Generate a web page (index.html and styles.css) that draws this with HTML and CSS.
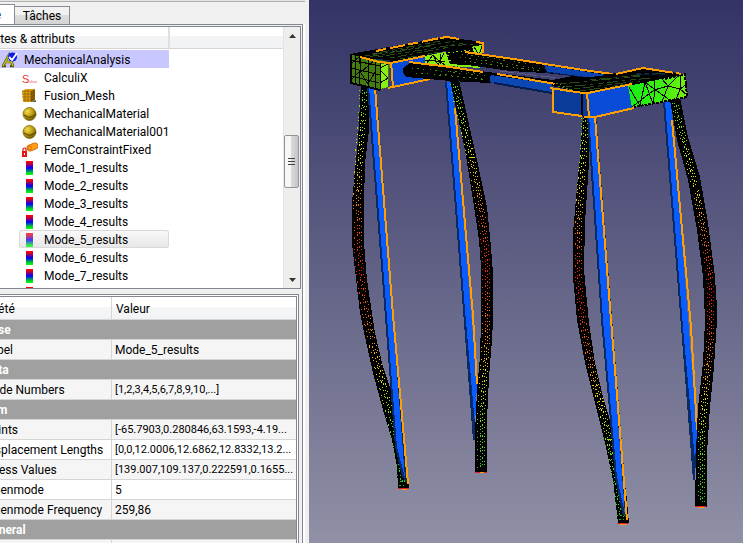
FILE: index.html
```html
<!DOCTYPE html>
<html lang="fr">
<head>
  <meta charset="utf-8" />
  <meta name="viewport" content="width=device-width, initial-scale=1" />
  <title>MechanicalAnalysis</title>
  <link rel="stylesheet" href="styles.css">
</head>
<body>

  <!-- shared icons -->
  <svg class="defs" width="0" height="0" aria-hidden="true">
    <defs>
      <linearGradient id="g-result" x1="0" y1="0" x2="0" y2="1">
        <stop offset="0" stop-color="#ff0000" />
        <stop offset="0.15" stop-color="#dd0022" />
        <stop offset="0.5" stop-color="#0000ff" />
        <stop offset="0.85" stop-color="#00dd22" />
        <stop offset="1" stop-color="#00ff00" />
      </linearGradient>
      <radialGradient id="g-ball" cx="0.35" cy="0.3" r="0.75">
        <stop offset="0" stop-color="#f0dc50" />
        <stop offset="0.5" stop-color="#c0a010" />
        <stop offset="1" stop-color="#6a5600" />
      </radialGradient>
      <symbol id="i-result" viewBox="0 0 16 16">
        <rect x="4" y="1" width="7" height="14" fill="url(#g-result)" />
      </symbol>
      <symbol id="i-ball" viewBox="0 0 16 16">
        <circle cx="7.5" cy="8" r="6.5" fill="url(#g-ball)" stroke="#7a6505" stroke-width="0.8" />
        <path d="M2 9q4 3 7 2t5-3" fill="none" stroke="#4d3f00" stroke-width="1" />
      </symbol>
    </defs>
  </svg>

  <aside class="dock">
    <div class="titlebar"></div>
    <nav class="tabs">
      <button class="tab active" type="button">Modèle</button>
      <button class="tab" type="button">Tâches</button>
    </nav>
    <div class="pane">

      <section class="tree">
        <div class="tree-view">
          <div class="tree-head">
            <span class="col-label">Étiquettes &amp; attributs</span>
          </div>
          <ul>
            <li class="analysis">
              <svg class="icon" viewBox="0 0 16 16"><path d="M1 14L7 3l4 11M4 10h6M0 14h4M8 14h4" fill="none" stroke="#5c5a10" stroke-width="2.6" /><path d="M1 14L7 3l4 11M4 10h6" fill="none" stroke="#c9c020" stroke-width="1.3" /><circle cx="10.500" cy="5" r="4.500" fill="#0a1ee6" /><path d="M7 5l3 3 5-7" fill="none" stroke="#fff" stroke-width="1.8" /></svg>
              MechanicalAnalysis
            </li>
            <li>
              <svg class="icon" viewBox="0 0 16 16"><text class="solver-s" x="0" y="13">S</text><text class="solver-rest" x="7" y="13">olver</text></svg>
              CalculiX
            </li>
            <li>
              <svg class="icon" viewBox="0 0 16 16"><path d="M0 3l4-2h9v11l-4 2H1z" fill="#e0a010" /><path d="M9 3l4-2v11l-4 2z" fill="#8a5c00" /><path d="M0 3h9M0 6h9l4-2M0 9h9l4-2M1 12h8l4-2M3 2v12M6 2v12M9 3v11" fill="none" stroke="#6e4a00" stroke-width="0.500" /><path d="M9 14h5v-2z" fill="#555" /></svg>
              Fusion_Mesh
            </li>
            <li><svg class="icon"><use href="#i-ball" /></svg>MechanicalMaterial</li>
            <li><svg class="icon"><use href="#i-ball" /></svg>MechanicalMaterial001</li>
            <li>
              <svg class="icon" viewBox="0 0 16 16"><path d="M8 6l5-2" stroke="#c86a00" stroke-width="7" stroke-linecap="round" /><path d="M8 6l5-2" stroke="#ff9c1c" stroke-width="5.500" stroke-linecap="round" /><circle cx="7.500" cy="6" r="2" fill="none" stroke="#d87400" /><rect x="0" y="9" width="5" height="6" fill="#e81414" /><path d="M1 9V7q1.500-2 3 0v2" fill="none" stroke="#d02020" stroke-width="1.200" /><path d="M2 11h1v2H2z" fill="#fff" /></svg>
              FemConstraintFixed
            </li>
            <li><svg class="icon"><use href="#i-result" /></svg>Mode_1_results</li>
            <li><svg class="icon"><use href="#i-result" /></svg>Mode_2_results</li>
            <li><svg class="icon"><use href="#i-result" /></svg>Mode_3_results</li>
            <li><svg class="icon"><use href="#i-result" /></svg>Mode_4_results</li>
            <li class="selected"><svg class="icon"><use href="#i-result" /></svg>Mode_5_results</li>
            <li><svg class="icon"><use href="#i-result" /></svg>Mode_6_results</li>
            <li><svg class="icon"><use href="#i-result" /></svg>Mode_7_results</li>
            <li><svg class="icon"><use href="#i-result" /></svg></li>
          </ul>
        </div>
        <div class="scrollbar">
          <button type="button" aria-label="Monter"><svg width="7" height="4"><path d="M0 4L3.500 0L7 4z" fill="#333" /></svg></button>
          <div class="track"><div class="thumb"><i></i><i></i><i></i></div></div>
          <button type="button" aria-label="Descendre"><svg width="7" height="4"><path d="M0 0L3.500 4L7 0z" fill="#333" /></svg></button>
        </div>
      </section>

      <section class="props">
        <table>
          <thead>
            <tr><th class="name">Propriété</th><th>Valeur</th></tr>
          </thead>
          <tbody>
            <tr class="group"><th colspan="2">Base</th></tr>
            <tr class="alt"><td>Label</td><td>Mode_5_results</td></tr>
            <tr class="group"><th colspan="2">Data</th></tr>
            <tr class="alt"><td>Node Numbers</td><td class="list">[1,2,3,4,5,6,7,8,9,10,...]</td></tr>
            <tr class="group"><th colspan="2">Fem</th></tr>
            <tr class="alt"><td>Points</td><td class="list">[-65.7903,0.280846,63.1593,-4.19...</td></tr>
            <tr><td>Displacement Lengths</td><td class="list">[0,0,12.0006,12.6862,12.8332,13.2...</td></tr>
            <tr class="alt"><td>Stress Values</td><td class="list">[139.007,109.137,0.222591,0.1655...</td></tr>
            <tr><td>Eigenmode</td><td>5</td></tr>
            <tr class="alt"><td>Eigenmode Frequency</td><td>259,86</td></tr>
            <tr class="group"><th colspan="2">General</th></tr>
            <tr class="alt"><td></td><td></td></tr>
          </tbody>
        </table>
      </section>

    </div>
  </aside>

  <main class="view">
    <svg class="scene" viewBox="309 0 434 543" preserveAspectRatio="xMinYMin meet" shape-rendering="crispEdges" fill="none">
      <defs>
        <!-- displacement colour scale along a leg -->
        <linearGradient id="scale-l" gradientUnits="userSpaceOnUse" x1="0" y1="85" x2="0" y2="485">
          <stop offset="0" stop-color="#5ce010" />
          <stop offset="0.15" stop-color="#d8f010" />
          <stop offset="0.25" stop-color="#f0b010" />
          <stop offset="0.36" stop-color="#f04810" />
          <stop offset="0.46" stop-color="#e82010" />
          <stop offset="0.6" stop-color="#f07010" />
          <stop offset="0.72" stop-color="#f0e010" />
          <stop offset="0.84" stop-color="#70e010" />
          <stop offset="1" stop-color="#10d020" />
        </linearGradient>
        <linearGradient id="scale-r" gradientUnits="userSpaceOnUse" x1="0" y1="105" x2="0" y2="518">
          <stop offset="0" stop-color="#5ce010" />
          <stop offset="0.15" stop-color="#d8f010" />
          <stop offset="0.25" stop-color="#f0b010" />
          <stop offset="0.36" stop-color="#f04810" />
          <stop offset="0.46" stop-color="#e01010" />
          <stop offset="0.6" stop-color="#f07010" />
          <stop offset="0.72" stop-color="#f0e010" />
          <stop offset="0.84" stop-color="#70e010" />
          <stop offset="1" stop-color="#10d020" />
        </linearGradient>
        <linearGradient id="g-end" x1="0" y1="0" x2="1" y2="0">
          <stop offset="0" stop-color="#14ee14" />
          <stop offset="0.6" stop-color="#40ee10" />
          <stop offset="1" stop-color="#78f010" />
        </linearGradient>
        <path id="mesh-a" d="M364 90C362 130 357 170 358 215C358 260 361 285 368 320C376 360 389 405 397 445L402 482" />
        <path id="mesh-b" d="M454 84C462 120 474 165 480 205C486 240 487 260 487 310C487 350 482 390 481 430V468" />
        <path id="mesh-c" d="M585 118C584 160 579 190 578 250C578 290 582 315 588 350C596 390 606 420 613 460L621 518" />
        <path id="mesh-d" d="M675 103C682 140 697 185 703 230C710 270 711 290 711 320C710 360 703 400 701 450V503" />
      </defs>

      <!-- rear legs -->
      <path fill="#082a66" d="M445 82h5L476 384L475 440h-2L463 310z" />
      <path fill="#0a5cff" d="M447 82h5L477 384L475 425L465 310z" />
      <path stroke="#ffa000" stroke-width="2" d="M455 108L473 316L477 384" />
      <path fill="#000" d="M450 80L457 113L465 150L473 200L479 240L481 267V320L480 357L477 390L475 433V472H487V420L489 377L492 340L493 320V273L491 247L487 207L477 160L468 120L459 80z" />
      <path fill="#082a66" d="M663 102h6L697 432L695 480h-2L681 327z" />
      <path fill="#0a5cff" d="M665 102h6L697 432L695 460L683 327z" />
      <path stroke="#ffa000" stroke-width="2" d="M672 120L691 327L697 430" />
      <path fill="#000" d="M670 100L677 140L688 180L697 230L703 277L705 320L703 363L698 407L696 453L695 507H707V453L710 407L714 367L717 320V307L715 277L708 223L700 177L688 137L680 98z" />

      <!-- front legs -->
      <path fill="#000" d="M361 84L358 140L355 170L352 203V243L355 270L360 313L365 337L373 373L383 410L392 440L397 467L398 488H409L408 470L392 393L383 367L375 333L370 300L367 280L364 243V203L365 163L369 130V84z" />
      <path fill="#000" d="M583 115L580 157L577 187L573 233V277L577 320L585 363L595 403L605 443L613 480L618 523H629L626 490L612 427L603 397L595 363L589 323L584 270L585 223L589 163V115z" />

      <!-- mesh nodes -->
      <g stroke="url(#scale-l)">
        <use href="#mesh-a" x="-4" stroke-dasharray="1 4 1 2 1 6 2 5" />
        <use href="#mesh-a" x="-1" stroke-dasharray="1 2 1 3 1 1 2 4" />
        <use href="#mesh-a" x="1" stroke-dasharray="1 3 2 5 1 2" stroke-dashoffset="2" />
        <use href="#mesh-a" x="3" stroke-dasharray="1 5 1 2 1 4" stroke-dashoffset="4" />
        <use href="#mesh-b" x="-4" stroke-dasharray="1 7 1 5 1 3" />
        <use href="#mesh-b" x="-1" stroke-dasharray="1 2 1 3 1 1 2 4" />
        <use href="#mesh-b" x="1" stroke-dasharray="1 3 2 2 1 2" stroke-dashoffset="2" />
        <use href="#mesh-b" x="3" stroke-dasharray="1 5 1 2 1 4" stroke-dashoffset="4" />
      </g>
      <g stroke="url(#scale-r)">
        <use href="#mesh-c" x="-3" stroke-dasharray="1 4 1 2 1 6 2 5" />
        <use href="#mesh-c" x="-1" stroke-dasharray="1 2 1 3 1 1 2 4" />
        <use href="#mesh-c" x="1" stroke-dasharray="1 3 2 5 1 2" stroke-dashoffset="2" />
        <use href="#mesh-c" x="3" stroke-dasharray="1 5 1 2 1 4" stroke-dashoffset="4" />
        <use href="#mesh-d" x="-3" stroke-dasharray="1 7 1 5 1 3" />
        <use href="#mesh-d" x="-1" stroke-dasharray="1 2 1 3 1 1 2 4" />
        <use href="#mesh-d" x="1" stroke-dasharray="1 3 2 2 1 2" stroke-dashoffset="2" />
        <use href="#mesh-d" x="3" stroke-dasharray="1 5 1 2 1 4" stroke-dashoffset="4" />
      </g>

      <path fill="#082a66" d="M367 86h9L407 484L402 476L395 447L385 317z" />
      <path fill="#0a5cff" d="M369 86h6L405 478L397 447L387 317z" />
      <path stroke="#ffa000" stroke-width="2" d="M375 88L393 315L403 427L408 484" />
      <path fill="#082a66" d="M587 115h9L628 520L622 513L615 477L601 320z" />
      <path fill="#0a5cff" d="M589 115h6L625 514L617 477L603 320z" />
      <path stroke="#ffa000" stroke-width="2" d="M595 117L611 320L627 520" />

      <!-- feet -->
      <path stroke="#10c818" stroke-dasharray="2 2 1 3" d="M400 481h7M399 485h8M620 515h7M619 519h7" />
      <path stroke="#e02030" d="M398 488h11M475 472h12M617 523h11M695 506h11" />
      <path stroke="#ffa000" d="M402 489h5M480 472h4M620 524h6M698 507h6" />

      <!-- left cross beam -->
      <path fill="#0a4cd8" d="M390 62L428 55L450 66L430 79L393 87z" />
      <path fill="#86ee10" d="M425 56L483 44L480 68L450 66L425 63z" />
      <path stroke="#000" d="M427 63l6-8 5 10 6-12M433 56l12 9M425 60l20 2M440 54v10M474 47l5 8 3-9M470 52l10 2" />
      <path fill="#000" d="M445 50L472 46L474 53L480 56L478 66L450 64z" />
      <path stroke="#80e010" stroke-dasharray="2 3 1 2" d="M448 53L470 50M447 56L464 54M449 60L456 61M455 66L480 67" />
      <path fill="#000" d="M350 54L445 37L483 42L482 45L445 51L425 56L391 62L372 61z" />
      <path stroke="#284c18" stroke-dasharray="5 3 9 3 3 4" d="M365 56L455 41M378 57L465 43M362 58L430 46M390 58L450 47M400 59L440 52M372 54L440 41M450 46L474 44" />
      <path stroke="#102850" stroke-width="2" d="M362 59l28 2" />
      <path fill="#447c10" d="M351 55L390 62L388 87L380 90L351 82z" />
      <path fill="#88f010" d="M380 64L388 63L388 87L380 89z" />
      <path stroke="#000" d="M355 56v28M361 57l-2 28M368 58l1 29M375 60v29M351 60l29 6M351 68l29 7M351 76l28 7M351 64l8-7 2 13-10 10M361 72l14-12M359 70l9 14 7-12M380 63v27M380 70l8 8-8 5M380 68l8-4" />
      <path stroke="#000" stroke-width="2" d="M351 54v29L380 90" />
      <path stroke="#ffa000" stroke-width="2" d="M360 57L379 62L391 63L425 56M391 62L393 87M388 88L430 79M440 38L447 37L459 39M476 42L483 43V53" />
      <path stroke="#ffa000" stroke-width="2" stroke-dasharray="10 4 16 3" d="M376 51L440 38" />

      <!-- rear rail -->
      <path fill="#000" d="M449 54L465 52L520 60L613 74L590 78L545 73L510 71L482 67L452 63z" />
      <path fill="#0a44b0" d="M544 65L607 75L590 78L547 72z" />
      <path stroke="#061c50" d="M545 72L590 78" />
      <path stroke="#ffa000" stroke-width="2" d="M465 52L520 60L545 64L590 71L613 74" />
      <path stroke="#488810" stroke-dasharray="1 4 1 3 2 5" d="M460 57L540 69M465 61L540 71M462 54L530 64" />

      <!-- front rail -->
      <path fill="#000" d="M410 63L488 72L553 80L572 76L590 78L570 90L555 86L490 83L450 81L406 77Q402 73 403 68z" />
      <path fill="#0c48b4" d="M491 75L552 84V93L491 83Q488 79 491 75z" />
      <path stroke="#061c50" stroke-width="2" d="M494 83L552 93" />
      <path stroke="#ffa000" stroke-width="2" d="M409 62L450 67L483 72M497 74L556 84" />
      <path stroke="#48900c" stroke-dasharray="1 4 2 4 1 6" d="M412 68L486 76M416 73L486 79M440 74L486 80M450 71L486 74" />
      <path stroke="#5c5c86" stroke-dasharray="14 3 20 4" d="M500 71L558 78" />

      <!-- right cross beam -->
      <path fill="#000" d="M552 86L560 80L600 76L643 68L684 74L632 86L588 94z" />
      <path stroke="#284c18" stroke-dasharray="6 3 11 4 3 5" d="M560 84L640 76M566 87L650 78M574 89L640 81M580 91L628 84M590 80L660 73" />
      <path stroke="#508010" stroke-dasharray="2 2" d="M556 83L566 87M558 86L572 90" />
      <path stroke="#0c2448" stroke-width="2" stroke-dasharray="5 3" d="M636 74L668 74" />
      <path fill="#0c3a98" d="M553 88L588 93L590 117L553 112z" />
      <path fill="#0a4cd8" d="M588 93L630 84L633 108L590 117z" />
      <path fill="url(#g-end)" d="M628 86L685 74L687 97L667 101L632 108z" />
      <path stroke="#000" d="M629 87l11 19 5-24M645 82l8 22M632 107l22-17 14-4M645 82l12 9M654 80l1 10-2 14M662 79l6 7 10-10M668 86l-6 16M668 86l12 3-4 11M680 75v14l7-5M657 91l14 10M680 89l7 6" />
      <path stroke="#000" stroke-width="2" stroke-dasharray="3 1" d="M665 79L685 74L687 97L667 101L634 107" />
      <path stroke="#000" stroke-width="2" d="M582 94V116" />
      <path stroke="#ffa000" stroke-width="2" d="M550 88L583 93L588 93L632 84M553 88V112L582 116M584 117H595L634 108M587 93L589 117M616 74L643 68L668 72" />
      <path stroke="#ffa000" stroke-width="2" stroke-dasharray="5 3" d="M668 72L683 74" />
    </svg>
  </main>

</body>
</html>
```

FILE: styles.css
```css
* {
  box-sizing: border-box;
}

body {
  margin: 0;
  display: flex;
  height: 100vh;
  overflow: hidden;
  background: #f0f0f0;
  color: #000;
  font: 12px/18px Roboto, "Open Sans", sans-serif;
}

button {
  border: 0;
  padding: 0;
  font: inherit;
  color: inherit;
}

.defs {
  position: absolute;
}

/* left dock, scrolled partly out of the window */

.dock {
  flex: 0 0 309px;
  display: flex;
  flex-direction: column;
  min-width: 0;
  overflow: hidden;
}

.titlebar {
  flex: none;
  height: 2px;
  margin-right: 4px;
  background: #e4e4e4;
  border-bottom: 1px solid #b0b0b0;
}

.tabs {
  flex: none;
  display: flex;
  align-items: flex-end;
  height: 22px;
  margin-left: -40px;
}

.tab {
  height: 18px;
  width: 55px;
  border: 1px solid #898c95;
  border-bottom: 0;
  border-left: 0;
  background: linear-gradient(#f2f2f2 50%, #dddddd 50%, #d4d4d4);
}

.tab.active {
  height: 20px;
  background: #fff;
  color: #102880;
  text-align: right;
  padding-right: 13px;
}

.pane {
  flex: 1;
  min-height: 0;
  display: flex;
  flex-direction: column;
  gap: 5px;
  margin: 0 6px 0 -40px;
  padding: 1px 1px 0 0;
  border: 1px solid #828790;
  border-bottom: 0;
  box-shadow: 2px 0 #fff;
}

.tree {
  flex: 0 0 263px;
  display: flex;
  border: 1px solid #828790;
  background: #fff;
  overflow: hidden;
}

.tree-view {
  flex: 1;
  overflow: hidden;
}

.tree-head {
  height: 22px;
  background: linear-gradient(#fff 45%, #f3f4f5 45%, #f0f2f4);
  border-bottom: 1px solid #d5d5d5;
}

.col-label {
  display: block;
  width: 208px;
  height: 21px;
  padding-right: 93px;
  line-height: 24px;
  text-align: right;
  white-space: nowrap;
  border-right: 2px solid #e0e0e0;
}

.tree ul {
  list-style: none;
  margin: 1px 0 0;
  padding: 0;
}

.tree li {
  display: flex;
  align-items: center;
  gap: 6px;
  width: 150px;
  height: 18px;
  margin-left: 57px;
  padding: 2px 0 0 3px;
  white-space: nowrap;
}

.tree .analysis {
  width: 207px;
  margin-left: 0;
  padding-left: 40px;
  background: #c8c8ff;
}

.tree .selected {
  background: linear-gradient(#fafafa, #e6e6e6);
  box-shadow: inset 0 0 0 1px #d9d9d9;
  border-radius: 3px;
}

.selected .icon {
  opacity: 0.75;
}

.icon {
  flex: none;
  width: 16px;
  height: 16px;
}

.solver-s {
  font: 11px "Liberation Sans", sans-serif;
  fill: #f03030;
}

.solver-rest {
  font: italic 4px "Liberation Serif", serif;
  fill: #f03030;
}

.scrollbar {
  flex: 0 0 17px;
  display: flex;
  flex-direction: column;
  background: #eee;
  border-left: 1px solid #e3e3e3;
}

.scrollbar button {
  display: flex;
  align-items: center;
  justify-content: center;
  height: 17px;
  background: none;
}

.track {
  flex: 1;
  padding-top: 91px;
}

.thumb {
  display: flex;
  flex-direction: column;
  align-items: center;
  justify-content: center;
  gap: 2px;
  width: 15px;
  height: 53px;
  border: 1px solid #959595;
  border-radius: 2px;
  background: linear-gradient(90deg, #f6f6f6 45%, #dcdcdc 45%, #c4c4c8);
}

.thumb i {
  width: 7px;
  height: 1px;
  background: #444;
}

/* property editor */

.props {
  flex: 1;
  min-height: 0;
  margin-right: 2px;
  padding: 1px 1px 0 0;
  border: 1px solid #828790;
  border-bottom: 0;
  background: #fff;
  overflow: hidden;
}

.props table {
  width: 100%;
  border-collapse: separate;
  border-spacing: 0;
  table-layout: fixed;
  border-top: 1px solid #828790;
  border-right: 1px solid #828790;
}

.props th,
.props td {
  height: 20px;
  padding: 1px 3px 0;
  line-height: 18px;
  text-align: left;
  white-space: nowrap;
  overflow: hidden;
  border-bottom: 1px solid #d5d5d5;
}

.props td:first-child,
.props .group th {
  padding-left: 22px;
}

.props td:first-child,
.props .name {
  border-right: 1px solid #d5d5d5;
}

.props .list {
  font-size: 11px;
}

.props thead th {
  height: 23px;
  padding-left: 4px;
  font-weight: normal;
  background: linear-gradient(#fff 45%, #f5f6f7 45%, #f2f3f5);
}

.props thead .name {
  width: 150px;
  padding-right: 97px;
  text-align: right;
}

.props .group th {
  color: #fff;
  font-weight: bold;
  background: #a0a0a0;
}

.props .alt td {
  background: #f5f5f5;
}

/* 3D view */

.view {
  flex: 1;
  min-width: 0;
  background: linear-gradient(#333366, #9090a6);
}

.scene {
  display: block;
  width: 100%;
  height: 100%;
}
```
